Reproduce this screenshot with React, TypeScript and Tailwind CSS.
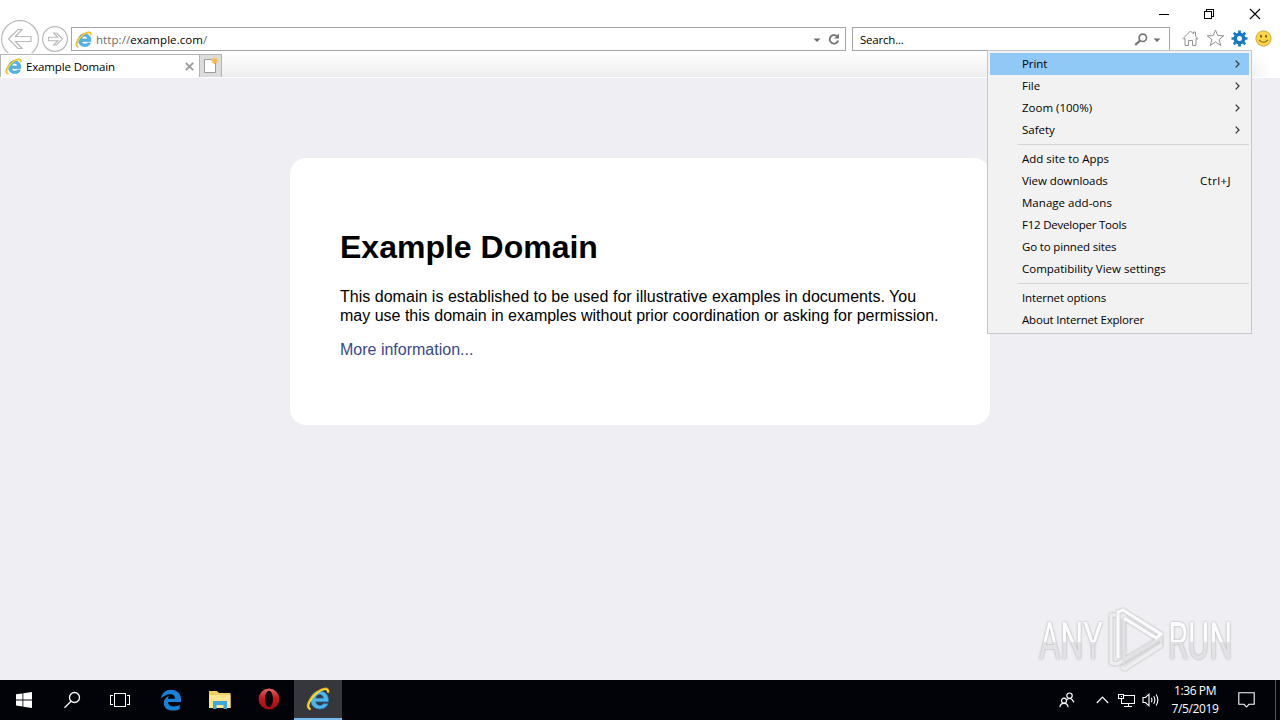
import type { ReactNode } from 'react';

type MenuEntry = { label: string; track: string; sub?: boolean; shortcut?: string; active?: boolean };

const menuGroups: MenuEntry[][] = [
  [
    { label: 'Print', track: 'tracking-[-0.1px]', sub: true, active: true },
    { label: 'File', track: 'tracking-normal', sub: true },
    { label: 'Zoom (100%)', track: 'tracking-normal', sub: true },
    { label: 'Safety', track: 'tracking-normal', sub: true },
  ],
  [
    { label: 'Add site to Apps', track: 'tracking-normal' },
    { label: 'View downloads', track: 'tracking-[-0.07px]', shortcut: 'Ctrl+J' },
    { label: 'Manage add-ons', track: 'tracking-[0.03px]' },
    { label: 'F12 Developer Tools', track: 'tracking-[-0.22px]' },
    { label: 'Go to pinned sites', track: 'tracking-[-0.16px]' },
    { label: 'Compatibility View settings', track: 'tracking-normal' },
  ],
  [
    { label: 'Internet options', track: 'tracking-[-0.16px]' },
    { label: 'About Internet Explorer', track: 'tracking-[-0.2px]' },
  ],
];

function IeIcon({ className }: { className: string }) {
  return (
    <svg viewBox="0 0 24 24" className={className} fill="none">
      <path
        fillRule="evenodd"
        d="M13.4 4 C18.8 4 22.4 7.8 22.4 13 V14.8 H9.6 C9.9 17.1 11.6 18.5 14 18.5 C15.6 18.5 16.8 17.8 17.5 16.8 H21.9 C20.8 20 17.8 22 13.8 22 C8.4 22 4.8 18.3 4.8 13.1 C4.8 7.8 8.4 4 13.4 4 Z M9.7 11.2 H17.6 C17.2 8.8 15.7 7.4 13.7 7.4 C11.6 7.4 10 8.8 9.7 11.2 Z"
        fill="#4fb5ea"
        stroke="#2089cb"
        strokeWidth="0.6"
      />
      <path d="M3.8 22 C-0.8 19.7 4 10.4 11.5 5 C17 1.1 22.9 0.4 22.2 5" stroke="#dcaa1c" strokeWidth="2.4" strokeLinecap="round" />
      <path d="M3.8 21.7 C0.2 19.5 4.5 10.7 11.8 5.4 C17 1.8 22.1 1.2 21.8 4.6" stroke="#fbdc3f" strokeWidth="1.5" strokeLinecap="round" />
    </svg>
  );
}

function TitleBar() {
  return (
    <div className="h-[27px] shrink-0 flex justify-end pr-0.5">
      <svg width="45" height="27" viewBox="0 0 45 27" stroke="#000" shapeRendering="crispEdges">
        <path d="M18 14.5 H28" />
      </svg>
      <svg width="46" height="27" viewBox="0 0 46 27" stroke="#000" fill="none" shapeRendering="crispEdges">
        <path d="M18.5 11.5 H25.5 V18.5 H18.5 Z M20.5 11.5 V9.5 H27.5 V16.5 H25.5" />
      </svg>
      <svg width="46" height="27" viewBox="0 0 46 27" stroke="#000" strokeWidth="1.1">
        <path d="M18 9 L28 19 M28 9 L18 19" />
      </svg>
    </div>
  );
}

function NavBar() {
  return (
    <div className="h-[26px] shrink-0 flex items-start">
      <svg width="40" height="40" viewBox="0 0 40 40" className="-mt-2 shrink-0" fill="none" stroke="#b9b9b9">
        <circle cx="20" cy="20" r="18.4" fill="#fff" strokeWidth="1.2" />
        <path d="M8.5 20 L18 10.5 H22 L15.5 17.5 H31 V22.5 H15.5 L22 29.5 H18 Z" strokeWidth="1.2" />
      </svg>
      <svg width="31" height="28" viewBox="0 0 31 28" className="-mt-0.5 shrink-0" fill="none" stroke="#b9b9b9">
        <circle cx="15" cy="14" r="12.4" fill="#fff" strokeWidth="1.2" />
        <path d="M22.5 14 L16.5 8 H13.6 L17.8 12.2 H8.5 V15.8 H17.8 L13.6 20 H16.5 Z" strokeWidth="1.1" />
      </svg>
      <div className="w-[775px] h-6 shrink-0 border border-[#a5a5a5] bg-white flex items-center pl-[3px] pr-[5px] mr-1.5">
        <IeIcon className="w-[17px] h-[17px] shrink-0" />
        <span className="ml-1 pt-0.5 flex-1 text-[#6d6d6d] tracking-[0.07px]">
          http://<span className="text-black">example.com</span>/
        </span>
        <svg width="8" height="5" viewBox="0 0 8 5" className="mr-[7px] mt-0.5"><path d="M0.5 0.5 H7.5 L4 4 Z" fill="#6e6e6e" /></svg>
        <svg width="12" height="13" viewBox="0 0 12 13" fill="none">
          <path d="M9.8 4.2 A4.3 4.3 0 1 0 10.2 7.5" stroke="#777" strokeWidth="1.9" />
          <path d="M11 0.5 V5.5 H6 Z" fill="#777" />
        </svg>
      </div>
      <div className="w-[318px] h-6 shrink-0 border border-[#a5a5a5] bg-white flex items-center pl-[7px] pr-2">
        <span className="flex-1 pt-0.5 tracking-[-0.2px]">Search...</span>
        <svg width="14" height="13" viewBox="0 0 14 13" fill="none" stroke="#777" className="mr-[5px]">
          <circle cx="8.8" cy="4.8" r="3.7" strokeWidth="1.7" />
          <path d="M6 7.6 L1.2 12" strokeWidth="2.2" />
        </svg>
        <svg width="8" height="5" viewBox="0 0 8 5" className="mt-0.5"><path d="M0.5 0.5 H7.5 L4 4 Z" fill="#6e6e6e" /></svg>
      </div>
      <div className="flex items-center pl-3 pt-0.5 gap-[7px]">
        <svg width="17" height="17" viewBox="0 0 17 17" fill="none" stroke="#929292">
          <path d="M1 8.5 L8.5 1 L11.5 4 V2 H13.5 V6 L16 8.5 L15.2 9.3 L14 8.3 V15.5 H10.5 V10.5 H6.5 V15.5 H3 V8.3 L1.8 9.3 Z" />
        </svg>
        <svg width="19" height="18" viewBox="0 0 19 18" fill="none" stroke="#929292" className="-mr-px">
          <path d="M9.5 1 L11.8 6.7 H17.8 L13 10.6 L14.8 16.6 L9.5 13 L4.2 16.6 L6 10.6 L1.2 6.7 H7.2 Z" />
        </svg>
        <svg width="17" height="17" viewBox="0 0 17 17" fill="none" stroke="#1479c4">
          <circle cx="8.5" cy="8.5" r="4.2" strokeWidth="3.4" />
          <path d="M8.5 0.5 V3 M8.5 14 V16.5 M0.5 8.5 H3 M14 8.5 H16.5 M2.8 2.8 L4.6 4.6 M12.4 12.4 L14.2 14.2 M2.8 14.2 L4.6 12.4 M12.4 4.6 L14.2 2.8" strokeWidth="2.7" />
        </svg>
        <svg width="17" height="17" viewBox="0 0 17 17">
          <circle cx="8.5" cy="8.5" r="7.6" fill="#fbd447" stroke="#d0a437" />
          <ellipse cx="6" cy="6.3" rx="0.9" ry="1.5" fill="#6d5618" />
          <ellipse cx="11" cy="6.3" rx="0.9" ry="1.5" fill="#6d5618" />
          <path d="M4 9.8 Q8.5 14.8 13 9.8" fill="none" stroke="#8a6a1c" strokeWidth="1.1" />
        </svg>
      </div>
    </div>
  );
}

function TabBar() {
  return (
    <div className="relative h-[25px] shrink-0 flex pt-px pb-px bg-linear-to-b from-white to-[#ededed] border-b border-white">
      <div className="w-[199px] h-[23px] bg-white border-t border-l border-[#b3b3b3] flex items-center pl-1 pr-[5px]">
        <IeIcon className="w-[17px] h-[17px] shrink-0" />
        <span className="ml-1 flex-1 pt-px tracking-[-0.15px]">Example Domain</span>
        <svg width="9" height="9" viewBox="0 0 9 9" stroke="#999" strokeWidth="1.8"><path d="M0.8 0.8 L8.2 8.2 M8.2 0.8 L0.8 8.2" /></svg>
      </div>
      <div className="w-[23px] h-[23px] bg-[#dcdcdc] border border-b-0 border-[#b3b3b3] flex items-center justify-center">
        <svg width="17" height="18" viewBox="0 0 17 18">
          <path d="M2.5 2.5 H9.5 L13.5 6 V15.5 H2.5 Z" fill="#fff" stroke="#9b9b9b" />
          <path d="M12.5 0.5 V7 M9.5 3.7 H16 M10.3 1.4 L14.8 6 M14.8 1.4 L10.3 6" stroke="#f8b551" strokeWidth="1.2" />
        </svg>
      </div>
      <div className="flex-1" />
      <div className="w-[30px] -my-px bg-linear-to-r from-transparent to-white to-70%" />
    </div>
  );
}

function ToolsMenu() {
  return (
    <div className="absolute left-[987px] top-[50px] w-[265px] h-[284px] bg-[#f2f2f2] border border-[#c4c8cc] p-0.5">
      {menuGroups.map((group, i) => (
        <div key={i}>
          {i > 0 && <div className="h-px bg-[#d4d4d4] ml-7 my-[3px]" />}
          {group.map((item) => (
            <div
              key={item.label}
              className={`h-[22px] flex items-center justify-between pl-8 pr-[9px] ${item.active ? 'bg-[#90c8f6]' : ''}`}
            >
              <span className={item.track}>{item.label}</span>
              {item.sub && (
                <svg width="5" height="8" viewBox="0 0 5 8" fill="none" stroke="#333" strokeWidth="1.2"><path d="M0.7 0.7 L4 4 L0.7 7.3" /></svg>
              )}
              {item.shortcut && <span className="mr-[9px] tracking-[0.4px]">{item.shortcut}</span>}
            </div>
          ))}
        </div>
      ))}
    </div>
  );
}

function Watermark() {
  return (
    <div className="absolute left-[1039px] top-[607px] w-[194px] h-[66px] flex items-center font-['Roboto',sans-serif] text-[51px] leading-[52px] drop-shadow-[0_0_1px_rgba(0,0,0,0.3)]">
      <div className="w-[68px] pt-[3px] shrink-0">
        <div className="w-max origin-left scale-x-[0.64] bg-linear-to-b from-[#fcfcfd] from-50% to-[#e2e2e4] to-50% bg-clip-text text-transparent">
          ANY
        </div>
      </div>
      <svg width="58" height="66" viewBox="0 0 58 66" fill="none" stroke="#fafafb" strokeWidth="3.3" className="shrink-0">
        <path d="M9 8 H4 V56 L10 57 L49 34" stroke="#eeeeef" />
        <path d="M15 61 L54 38 V31 L17 53 V12" stroke="#e2e2e4" />
        <path d="M11 51 V5 L16 3 L54 27 L49 31 L17 11" />
        <path d="M14 60 L18 62 L55 38" stroke="#eeeeef" />
      </svg>
      <div className="w-[64px] pl-[3px] pt-[3px] shrink-0">
        <div className="w-max origin-left scale-x-[0.64] bg-linear-to-b from-[#fcfcfd] from-50% to-[#e2e2e4] to-50% bg-clip-text text-transparent">
          RUN
        </div>
      </div>
    </div>
  );
}

function TaskButton({ children, active }: { children: ReactNode; active?: boolean }) {
  return (
    <div className={`h-10 flex items-center justify-center ${active ? 'w-12 bg-[#35373c] border-b-2 border-[#76b9ed]' : 'w-[50px]'}`}>
      {children}
    </div>
  );
}

function Taskbar() {
  return (
    <div className="h-10 shrink-0 bg-[#010308] flex items-center text-white">
      <div className="w-12 flex justify-center">
        <svg width="16" height="16" viewBox="0 0 16 16" fill="#fff">
          <path d="M0 2.3 L6.5 1.4 V7.5 H0 Z M7.3 1.3 L16 0 V7.5 H7.3 Z M0 8.4 H6.5 V14.5 L0 13.6 Z M7.3 8.4 H16 V16 L7.3 14.7 Z" />
        </svg>
      </div>
      <div className="w-12 flex justify-center">
        <svg width="18" height="18" viewBox="0 0 18 18" fill="none" stroke="#fff" strokeWidth="1.3">
          <circle cx="11.5" cy="6.5" r="5" />
          <path d="M8 10.2 L1.5 16.7" />
        </svg>
      </div>
      <div className="w-12 flex justify-center">
        <svg width="20" height="14" viewBox="0 0 20 14" fill="none" stroke="#fff" shapeRendering="crispEdges">
          <path d="M4.5 0.5 H15.5 V13.5 H4.5 Z M3 2.5 H0.5 V11.5 H3 M17 2.5 H19.5 V11.5 H17" />
        </svg>
      </div>
      <TaskButton>
        <svg width="22" height="22" viewBox="0 0 22 22" fill="#1683d8" className="ml-1">
          <path d="M1 9.6 C1.9 3.5 6 0.7 11 0.7 C17.5 0.7 21 5 21 10.5 V13 H8 C8.2 16.2 10.8 17.4 13.8 17.4 C16.1 17.4 18 16.8 19.7 15.8 V20 C17.8 21 15.5 21.6 12.7 21.6 C7.5 21.6 3.8 18.9 3.8 14.3 C3.8 10.8 5.9 8.2 9 6.8 C8.2 7.8 7.9 8.8 7.8 9.7 H15 C15 7 13.5 5.3 10.4 5.3 C6.7 5.3 3.3 7.1 1 9.6 Z" />
        </svg>
      </TaskButton>
      <TaskButton>
        <svg width="22" height="20" viewBox="0 0 22 20" className="ml-0.5">
          <path d="M0 1 H8 L10 3 H21.5 V18 H0 Z" fill="#f3cd60" />
          <path d="M0 5 H21.5 V18 H0 Z" fill="#fde68e" />
          <path d="M4 19 V11 H18 V19 H14.5 V15 H7.5 V19 Z" fill="#3ea8dc" />
        </svg>
      </TaskButton>
      <TaskButton>
        <svg width="22" height="22" viewBox="0 0 22 22" className="-mt-0.5">
          <defs>
            <linearGradient id="opera" x1="0" y1="0" x2="0" y2="1">
              <stop offset="0" stopColor="#e56565" />
              <stop offset="0.45" stopColor="#c41a20" />
              <stop offset="1" stopColor="#a40c12" />
            </linearGradient>
          </defs>
          <ellipse cx="11" cy="11" rx="10.4" ry="10.4" fill="url(#opera)" />
          <ellipse cx="11" cy="11" rx="4" ry="8.3" fill="#08060a" />
        </svg>
      </TaskButton>
      <TaskButton active>
        <IeIcon className="w-6 h-6" />
      </TaskButton>
      <div className="flex-1" />
      <svg width="16" height="16" viewBox="0 0 16 16" fill="none" stroke="#fff" strokeWidth="1.2" className="mr-[21px]">
        <circle cx="10.5" cy="3.7" r="2.7" />
        <path d="M7.9 7.6 Q10.5 5.5 13 7.4 L15 10.4" />
        <circle cx="5" cy="8.7" r="2.5" />
        <path d="M0.9 15.2 Q1.2 11.4 5 11.4 Q8.8 11.4 9.1 15.2" />
      </svg>
      <svg width="13" height="8" viewBox="0 0 13 8" fill="none" stroke="#fff" strokeWidth="1.2" className="mr-[9px]"><path d="M0.8 7 L6.5 1.2 L12.2 7" /></svg>
      <svg width="17" height="15" viewBox="0 0 17 15" fill="none" stroke="#fff" className="mr-[7px]" shapeRendering="crispEdges">
        <path d="M6 2.5 H16.5 V10.5 H3.5 V6 M10.5 11 V13.5 M6 13.5 H14 M0.5 1.5 H5.5 V5.5 H0.5 Z M2.5 3.5 H3.5" />
      </svg>
      <svg width="18" height="14" viewBox="0 0 18 14" fill="none" stroke="#fff" strokeWidth="1.1" className="mr-[8px]">
        <path d="M1 4.5 H3.5 L7 1.2 V12.8 L3.5 9.5 H1 Z" />
        <path d="M9.3 4.8 Q10.6 7 9.3 9.2 M11.7 3.2 Q14 7 11.7 10.8 M14.1 1.5 Q17.6 7 14.1 12.5" />
      </svg>
      <div className="w-[54px] text-center leading-[18px] text-[12px]">
        <div className="whitespace-nowrap tracking-[-0.4px]">1:36 PM</div>
        <div className="whitespace-nowrap tracking-[-0.4px]">7/5/2019</div>
      </div>
      <svg width="17" height="16" viewBox="0 0 17 16" fill="none" stroke="#fff" strokeWidth="1.1" className="ml-4 mr-5">
        <path d="M0.8 0.8 H16.2 V12.3 H11 L8.5 15 L6 12.3 H0.8 Z" />
      </svg>
      <div className="w-[5px] h-10 border-l border-[#55575b]" />
    </div>
  );
}

export default function App() {
  return (
    <div className="relative w-[1280px] h-[720px] overflow-hidden flex flex-col bg-white text-black text-[11.5px] leading-4 font-['Open_Sans',sans-serif]">
      <TitleBar />
      <NavBar />
      <TabBar />
      <main className="flex-1 bg-[#efeff3] pt-20 font-['Liberation_Sans',Arial,sans-serif]">
        <div className="w-[700px] h-[267px] mx-auto bg-white rounded-2xl px-[50px] pt-[71px]">
          <h1 className="text-[32px] leading-[37px] font-bold">Example Domain</h1>
          <p className="mt-[21px] text-[16px] leading-[19px]">
            <span className="tracking-[0.02px]">This domain is established to be used for illustrative examples in documents. You</span>
            <br />
            may use this domain in examples without prior coordination or asking for permission.
          </p>
          <a className="block mt-[15px] text-[16px] leading-[19px] text-[#38488f]">More information...</a>
        </div>
      </main>
      <Taskbar />
      <ToolsMenu />
      <Watermark />
    </div>
  );
}
